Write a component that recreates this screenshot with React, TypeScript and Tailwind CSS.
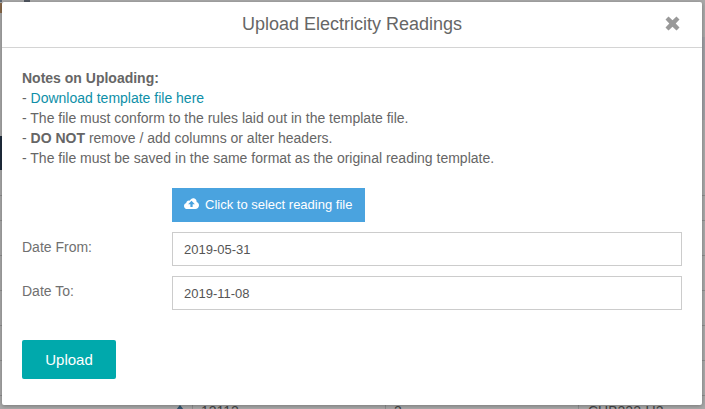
import React from 'react';

const CloudUpload = () => (
  <svg width="15" height="11" viewBox="0 0 16 12" preserveAspectRatio="none" className="mb-[3px] shrink-0">
    <path
      fill="#ffffff"
      fillRule="evenodd"
      d="M3.6 12C1.6 12 0 10.5 0 8.6 0 7.1 1 5.8 2.4 5.4 2.5 3.9 3.7 2.8 5.2 2.8c.4 0 .7.1 1 .2C7 1.1 8.8-.1 10.6.4c1.8.4 3 2 2.9 3.9C15 4.8 16 6.2 16 7.8 16 10.100 14.200 12 12 12H3.600ZM8 3 4.400 6.700h2.400v3h2.400v-3h2.400L8 3Z"
    />
  </svg>
);

const CloseIcon = () => (
  <svg width="15" height="15" viewBox="0 0 15 15">
    <path d="M3.500 .5 7.500 4.300 11.500 .5 14.500 3.500 10.700 7.500 14.500 11.500 11.500 14.500 7.500 10.700 3.500 14.500 .5 11.500 4.300 7.500 .5 3.500Z" fill="#999999" />
  </svg>
);

const DateRow = ({ label, value }: { label: string; value: string }) => (
  <div className="flex items-start">
    <label className="w-[150px] shrink-0 pt-[5px] text-[#707070]">{label}</label>
    <input
      readOnly
      value={value}
      className="h-[34px] w-[510px] border border-[#cccccc] bg-white px-[11px] text-[13px] text-[#555555] outline-none"
    />
  </div>
);

// the table page dimmed behind the modal, only its edges show
const PageBehind = () => (
  <div className="flex h-full flex-col">
    <div className="h-[196px] shrink-0 border-b border-[#8f8f8f]">
      <div className="flex h-[2px]">
        <div className="w-[2px] bg-[#5b6672]" />
        <div className="ml-[22px] w-[6px] bg-[#4f5660]" />
      </div>
      <div className="flex justify-between">
        <div className="w-[2px]">
          <div className="mt-px h-[10px] bg-[#8a6a4a]" />
          <div className="mt-[123px] h-[34px] bg-[#1f2d3d]" />
        </div>
        <div className="mt-[35px] h-[83px] w-[3px] bg-[#a0a0a5]" />
      </div>
    </div>
    <div className="h-[25px] shrink-0 border-b border-[#8f8f8f]" />
    <div className="h-[35px] shrink-0 border-b border-[#8f8f8f]" />
    <div className="h-[35px] shrink-0 border-b border-[#8f8f8f]" />
    <div className="h-[35px] shrink-0 border-b border-[#8f8f8f]" />
    <div className="h-[35px] shrink-0 border-b border-[#8f8f8f]" />
    <div className="h-[35px] shrink-0 border-b border-[#8f8f8f]" />
    <div className="flex min-h-0 flex-1 pl-[176px] leading-[12px] text-[#444444]">
      <div className="mt-[9px] mr-2 h-0 w-0 border-x-[4px] border-b-[5px] border-x-transparent border-b-[#33566f]" />
      <div className="w-[193px] border-l border-[#8f8f8f] pt-[9px] pl-2">12112</div>
      <div className="w-[193px] border-l border-[#8f8f8f] pt-[9px] pl-2">2</div>
      <div className="flex-1 border-l border-[#8f8f8f] pt-[9px] pl-[9px]">CUB222-U2</div>
    </div>
  </div>
);

const App = () => {
  return (
    <div className="relative h-[409px] w-[705px] overflow-hidden bg-[#a9a9a9] font-['Liberation_Sans',Arial,sans-serif] text-sm text-[#666666]">
      <PageBehind />

      {/* Modal */}
      <div className="absolute left-[2px] top-[2px] flex h-[403px] w-[700px] flex-col rounded-[2px] bg-white shadow-[0_1px_4px_rgba(0,0,0,0.3)]">
        <div className="flex h-[46px] shrink-0 items-center border-b border-[#d4d4d4] pr-[22px] pb-[2px] pl-[59px]">
          <h4 className="flex-1 text-center text-[18px] leading-[44px] text-[#666666]">Upload Electricity Readings</h4>
          <button className="ml-[22px] flex">
            <CloseIcon />
          </button>
        </div>

        <div className="flex flex-1 flex-col px-5 pt-[20px]">
          <div className="leading-[20px]">
            <b>Notes on Uploading:</b>
            <br />- <a className="text-[#0e8fa8]">Download template file here</a>
            <br />- The file must conform to the rules laid out in the template file.
            <br />- <b>DO NOT</b> remove / add columns or alter headers.
            <br />- The file must be saved in the same format as the original reading template.
          </div>

          <div className="mt-[20px] pl-[150px]">
            <button className="flex h-[34px] w-[193px] items-center gap-[6px] bg-[#4aa3df] pl-[12px] text-[13px] font-normal text-white">
              <CloudUpload />
              Click to select reading file
            </button>
          </div>

          <div className="mt-[10px] flex flex-col gap-[10px]">
            <DateRow label="Date From:" value="2019-05-31" />
            <DateRow label="Date To:" value="2019-11-08" />
          </div>

          <div className="mt-[30px]">
            <button className="h-[39px] w-[94px] rounded-[2px] bg-[#00a9ac] text-[15px] text-white">Upload</button>
          </div>
        </div>
      </div>
    </div>
  );
};

export default App;
